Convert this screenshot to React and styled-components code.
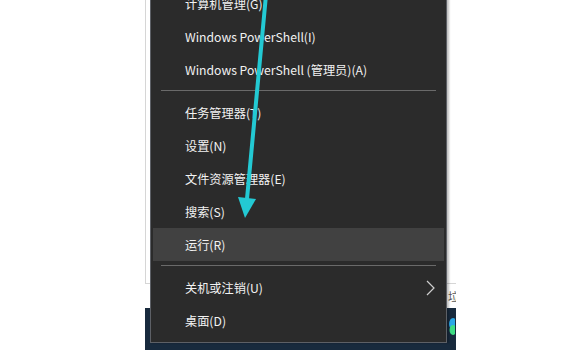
import React from 'react';
import styled, { createGlobalStyle } from 'styled-components';

const GlobalStyle = createGlobalStyle`
  html, body {
    margin: 0;
    padding: 0;
    background: #ffffff;
    overflow: hidden;
  }
`;

const items = [
  { label: '计算机管理(G)' },
  { label: 'Windows PowerShell(I)' },
  { label: 'Windows PowerShell (管理员)(A)' },
  { sep: true },
  { label: '任务管理器(T)' },
  { label: '设置(N)' },
  { label: '文件资源管理器(E)' },
  { label: '搜索(S)' },
  { label: '运行(R)', active: true },
  { sep: true },
  { label: '关机或注销(U)', sub: true },
  { label: '桌面(D)' },
];

function App() {
  return (
    <>
      <GlobalStyle />
      <Stage>
        <Backdrop>
          <LeftSpace />
          <Desktop>
            <WindowFrame />
            <DesktopStrip>
              <IconLabel>垃圾</IconLabel>
            </DesktopStrip>
            <Taskbar>
              <TrayIcon width="8" height="18" viewBox="0 0 8 18">
                <ellipse cx="6" cy="6" rx="4" ry="6" fill="#2aa7e6" />
                <ellipse cx="6" cy="12" rx="3.5" ry="5" fill="#3ddc84" />
              </TrayIcon>
            </Taskbar>
          </Desktop>
        </Backdrop>

        <Menu>
          {items.map((it, i) =>
            it.sep ? (
              <Separator key={i} />
            ) : (
              <Item key={i} active={it.active}>
                <span>{it.label}</span>
                {it.sub && (
                  <Chevron width="9" height="16" viewBox="0 0 9 16">
                    <polyline points="1,1 8,8 1,15" fill="none" stroke="#cfcfcf" strokeWidth="1.2" />
                  </Chevron>
                )}
              </Item>
            )
          )}
        </Menu>

        <Annotation width="588" height="350" viewBox="0 0 588 350">
          <line x1="266" y1="-5" x2="247" y2="199" stroke="#23c9d3" strokeWidth="4" strokeLinecap="round" />
          <polygon points="238,197 256,199 245,218" fill="#23c9d3" />
        </Annotation>
      </Stage>
    </>
  );
}

const Stage = styled.div`
  position: relative;
  width: 588px;
  height: 350px;
  overflow: hidden;
  font-family: "Noto Sans CJK SC", "Noto Sans", sans-serif;
`;

const Backdrop = styled.div`
  display: flex;
  height: 100%;
`;

const LeftSpace = styled.div`
  width: 145px;
`;

const Desktop = styled.div`
  width: 311px;
  display: flex;
  flex-direction: column;
`;

const WindowFrame = styled.div`
  height: 284px;
  box-sizing: border-box;
  border-left: 1px solid #d6d6d6;
  border-bottom: 1px solid #d6d6d6;
`;

const DesktopStrip = styled.div`
  height: 24px;
  display: flex;
  justify-content: flex-end;
  align-items: center;
  overflow: hidden;
`;

const IconLabel = styled.span`
  font-size: 11px;
  color: #555;
  margin-right: -14px;
`;

const Taskbar = styled.div`
  flex: 1;
  background: #182a3d;
  display: flex;
  justify-content: flex-end;
  align-items: center;
`;

const TrayIcon = styled.svg`
  display: block;
  margin-right: 1px;
  margin-top: -4px;
`;

const Menu = styled.div`
  position: absolute;
  left: 150px;
  top: -14px;
  width: 297px;
  box-sizing: border-box;
  background: #2b2b2b;
  border: 1px solid #5d6066;
  padding: 0 2px 5px;
  box-shadow: 2px 0 2px rgba(0, 0, 0, 0.25);
  display: flex;
  flex-direction: column;
`;

const Item = styled.div`
  height: 33px;
  display: flex;
  align-items: center;
  justify-content: space-between;
  padding: 0 9px 0 32px;
  font-size: 12.2px;
  color: #f2f2f2;
  background: ${p => (p.active ? '#414141' : 'transparent')};
`;

const Chevron = styled.svg`
  display: block;
`;

const Separator = styled.div`
  height: 1px;
  margin: 4px 8px 5px;
  background: #6a6a6a;
`;

const Annotation = styled.svg`
  position: absolute;
  left: 0;
  top: 0;
  pointer-events: none;
`;

export default App;
